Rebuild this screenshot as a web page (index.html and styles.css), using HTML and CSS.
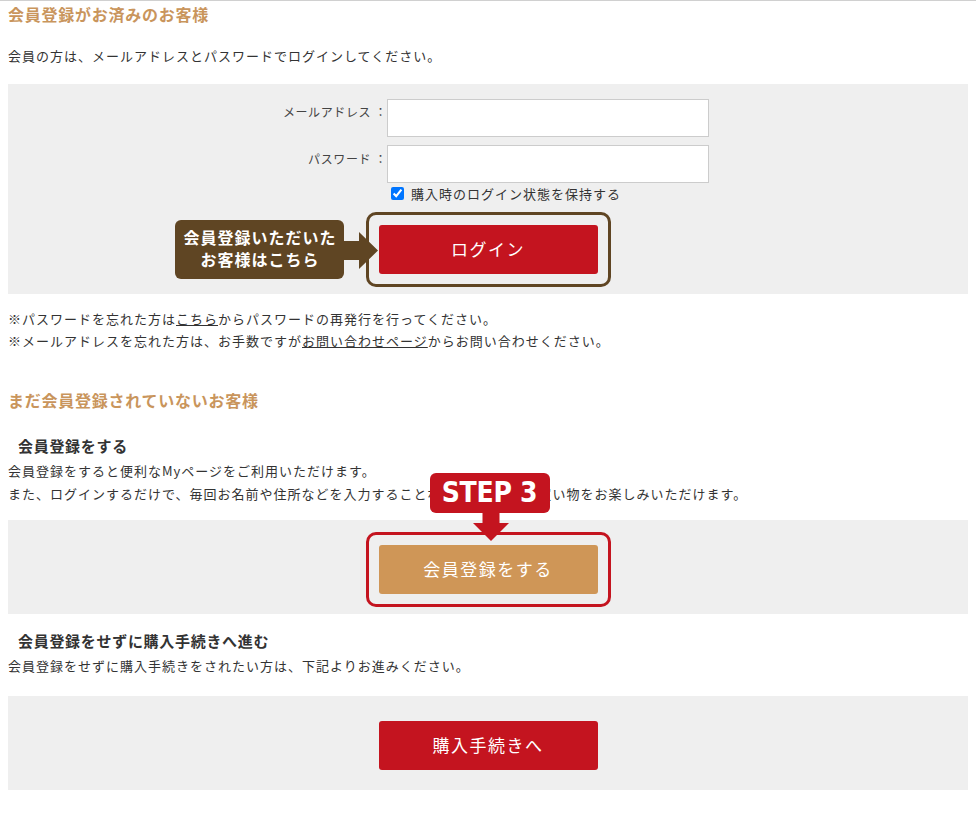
FILE: index.html
```html
<!DOCTYPE html>
<html lang="ja">

<head>
  <meta charset="UTF-8">
  <meta name="viewport" content="width=device-width, initial-scale=1.0">
  <title>ログイン</title>
  <link rel="stylesheet" href="styles.css">
</head>

<body>
  <div class="page">
    <!-- 会員の方 -->
    <section>
      <h2 class="sec-title">会員登録がお済みのお客様</h2>
      <p class="lead">会員の方は、メールアドレスとパスワードでログインしてください。</p>
      <div class="panel panel-login">
        <form class="login-form">
          <label class="form-label" for="email">メールアドレス ：</label>
          <input class="form-input" id="email" type="text">
          <label class="form-label" for="pass">パスワード ：</label>
          <input class="form-input" id="pass" type="password">
          <label class="keep"><input class="keep-check" type="checkbox" checked>購入時のログイン状態を保持する</label>
        </form>
        <div class="action-row">
          <div class="callout">
            会員登録いただいた<br>お客様はこちら
            <svg class="callout-arrow" width="35" height="37" viewBox="0 0 35 37">
              <path d="M0 9H15V0L34 18.5L15 37V28H0Z" fill="#5f4523"/>
            </svg>
          </div>
          <div class="frame frame-brown">
            <button class="btn btn-red" type="button">ログイン</button>
          </div>
        </div>
      </div>
      <p class="notes">
        ※パスワードを忘れた方は<a href="#">こちら</a>からパスワードの再発行を行ってください。<br>
        ※メールアドレスを忘れた方は、お手数ですが<a href="#">お問い合わせページ</a>からお問い合わせください。
      </p>
    </section>

    <!-- 会員でない方 -->
    <section>
      <h2 class="sec-title sec-title-second">まだ会員登録されていないお客様</h2>

      <h3 class="sub-title">会員登録をする</h3>
      <p class="desc">会員登録をすると便利なMyページをご利用いただけます。<br>
        また、ログインするだけで、毎回お名前や住所などを入力することなくスムーズにお買い物をお楽しみいただけます。</p>
      <div class="panel">
        <div class="action-row">
          <div class="frame frame-red">
            <div class="step-badge">
              STEP 3
              <svg class="step-arrow" width="36" height="28" viewBox="0 0 36 28">
                <path d="M9.5 0H26.5V10H36L18 28L0 10H9.5Z" fill="#c4141f"/>
              </svg>
            </div>
            <button class="btn btn-tan" type="button">会員登録をする</button>
          </div>
        </div>
      </div>

      <h3 class="sub-title sub-title-guest">会員登録をせずに購入手続きへ進む</h3>
      <p class="desc">会員登録をせずに購入手続きをされたい方は、下記よりお進みください。</p>
      <div class="panel panel-guest">
        <div class="action-row">
          <div class="frame">
            <button class="btn btn-red" type="button">購入手続きへ</button>
          </div>
        </div>
      </div>
    </section>
  </div>
</body>

</html>
```

FILE: styles.css
```css
body {
  margin: 0;
  background: #fff;
  color: #333;
  font-family: "Noto Sans CJK JP", "Noto Sans", sans-serif;
}

.page {
  border-top: 1px solid #d0d0d0;
  padding: 0 8px;
}

p {
  margin: 0;
}

.sec-title {
  margin: 1px 0 0;
  font-size: 16px;
  line-height: 24px;
  letter-spacing: 0.75px;
  font-weight: bold;
  color: #c9955c;
}

.sec-title-second {
  margin-top: 36px;
}

.lead {
  margin-top: 20px;
  font-size: 13px;
  line-height: 20px;
  letter-spacing: 1px;
}

.panel {
  margin-top: 15px;
  padding: 12px 0 7px;
  background: #efefef;
}

.panel-login {
  margin-top: 18px;
  padding-top: 15px;
}

.panel-guest {
  margin-top: 19px;
}

/* ログインフォーム */
.login-form {
  display: grid;
  grid-template-columns: 379px 322px;
  align-items: start;
}

.form-label {
  padding-top: 3px;
  text-align: right;
  font-size: 12px;
  line-height: 20px;
  letter-spacing: 0.6px;
  color: #444;
}

.form-input {
  box-sizing: border-box;
  width: 322px;
  height: 38px;
  margin: 0 0 8px;
  border: 1px solid #ccc;
  background: #fff;
}

.form-input + .form-label {
  padding-top: 4px;
}

.keep {
  grid-column: 2;
  margin-top: -8px;
  height: 20px;
  display: flex;
  align-items: center;
  font-size: 13px;
  letter-spacing: 1px;
  color: #333;
}

.keep-check {
  width: 13px;
  height: 13px;
  margin: 0 7px 0 4px;
}

.action-row {
  display: grid;
  grid-template-columns: 1fr auto 1fr;
  align-items: center;
}

.panel-login .action-row {
  margin-top: 9px;
}

.frame {
  grid-column: 2;
  position: relative;
  padding: 10px;
  border: 3px solid transparent;
  border-radius: 10px;
}

.frame-brown {
  border-color: #5f4523;
}

.frame-red {
  border-color: #c4141f;
}

.btn {
  display: block;
  width: 219px;
  height: 49px;
  padding: 0 0 3px;
  border: none;
  border-radius: 3px;
  color: #fff;
  font-family: inherit;
  font-size: 17px;
  letter-spacing: 1.5px;
  cursor: pointer;
}

.btn-red {
  background: #c4141f;
}

.btn-tan {
  background: #cf9657;
}

/* 吹き出し */
.callout {
  grid-column: 1;
  justify-self: end;
  position: relative;
  margin-right: 22px;
  padding: 6px 7px 9px 8px;
  border-radius: 6px;
  background: #5f4523;
  color: #fff;
  font-size: 16px;
  font-weight: bold;
  line-height: 22px;
  letter-spacing: 1px;
  text-align: center;
}

.callout-arrow {
  position: absolute;
  left: 100%;
  top: 50%;
  margin-top: -18px;
}

.step-badge {
  position: absolute;
  left: 61px;
  top: -62px;
  width: 120px;
  height: 40px;
  border-radius: 6px;
  background: #c4141f;
  color: #fff;
  font-family: "DejaVu Sans Condensed", "DejaVu Sans", sans-serif;
  font-weight: bold;
  font-size: 28px;
  line-height: 40px;
  letter-spacing: -0.3px;
  text-align: center;
}

.step-arrow {
  position: absolute;
  left: 43px;
  top: 100%;
}

.notes {
  margin-top: 14px;
  font-size: 13px;
  line-height: 22px;
  letter-spacing: 1px;
}

.notes a {
  color: #333;
  text-decoration: underline;
}

.sub-title {
  margin: 23px 0 0;
  padding-left: 10px;
  font-size: 15px;
  line-height: 22px;
  letter-spacing: 0.7px;
  font-weight: bold;
  color: #333;
}

.sub-title-guest {
  margin-top: 16px;
}

.desc {
  margin-top: 2px;
  font-size: 13px;
  line-height: 23px;
  letter-spacing: 1px;
}
```
